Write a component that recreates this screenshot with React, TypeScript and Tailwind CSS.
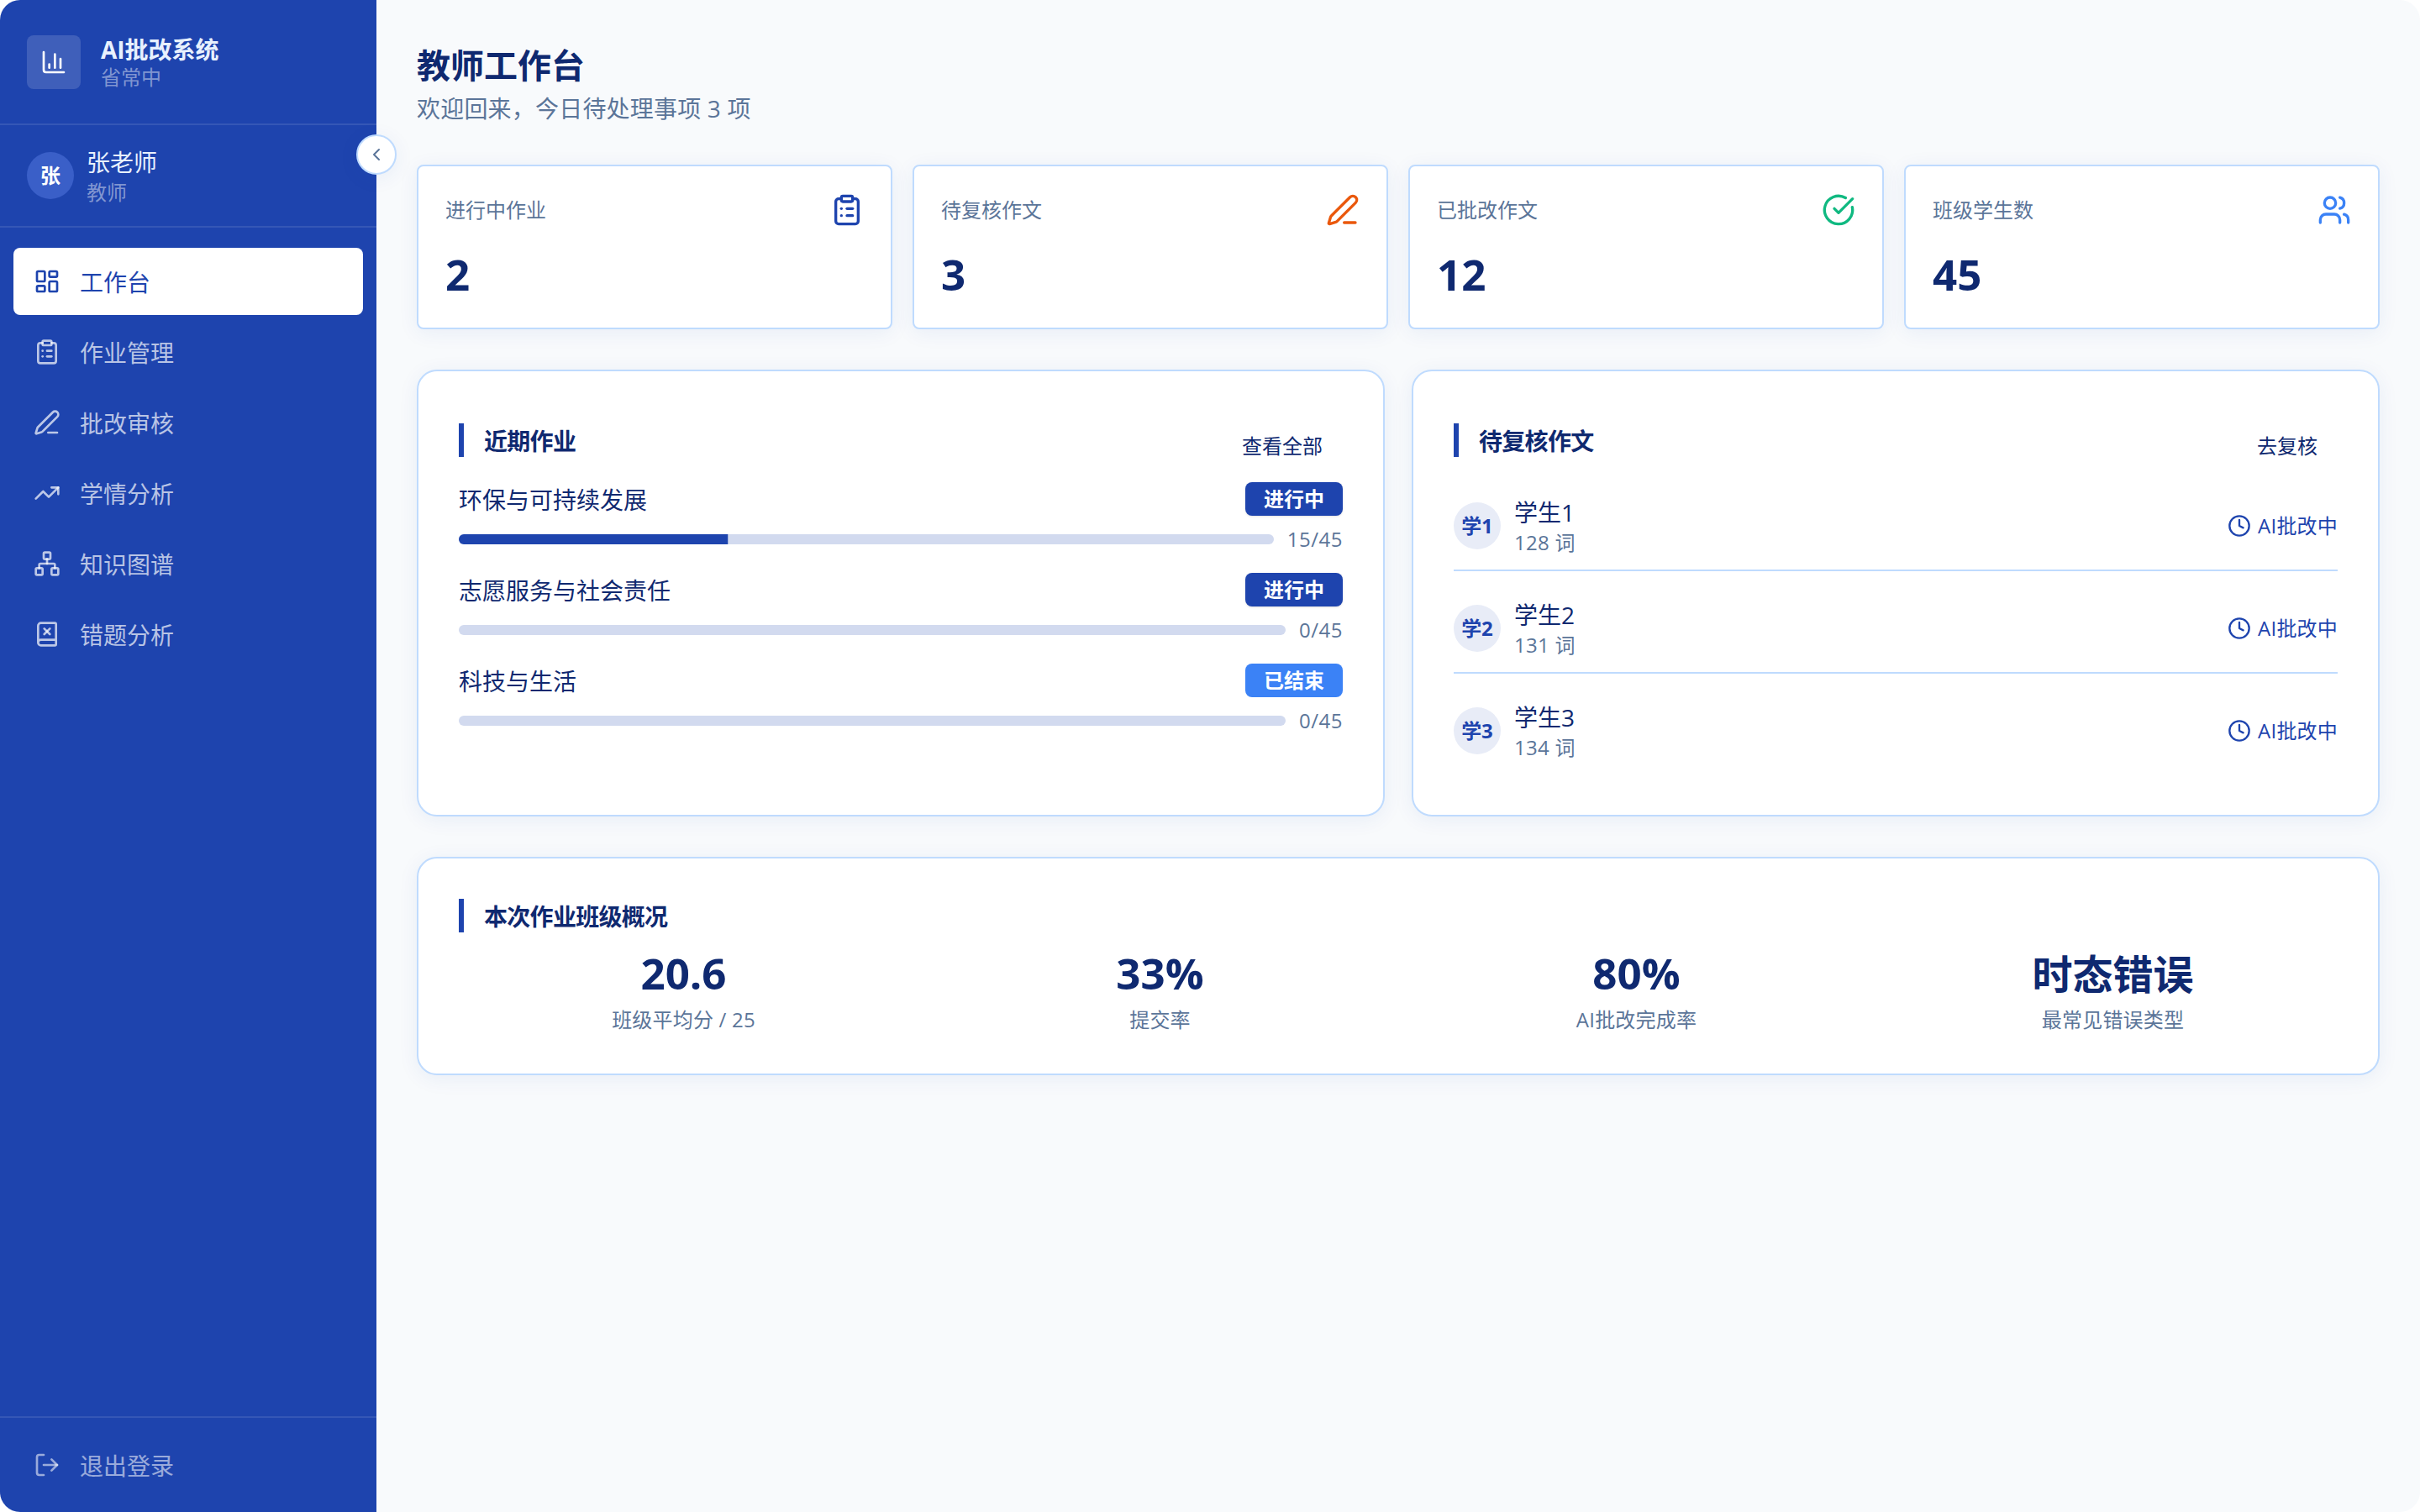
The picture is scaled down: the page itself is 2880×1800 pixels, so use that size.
import React, { useState } from 'react';
import {
    ChevronLeft,
    CircleCheckBig,
    ClipboardList,
    Clock,
    LayoutDashboard,
    LogOut,
    Network,
    PenLine,
    TrendingUp,
    Users,
} from 'lucide-react';

const NAV_ITEMS = [
    { id: 'dashboard', label: '工作台', icon: LayoutDashboard },
    { id: 'homework', label: '作业管理', icon: ClipboardList },
    { id: 'review', label: '批改审核', icon: PenLine },
    { id: 'analysis', label: '学情分析', icon: TrendingUp },
    { id: 'graph', label: '知识图谱', icon: Network },
    { id: 'mistakes', label: '错题分析', icon: BookX },
];

const STATS = [
    { label: '进行中作业', value: 2, icon: ClipboardList, color: 'text-[#1e44ae]' },
    { label: '待复核作文', value: 3, icon: PenLine, color: 'text-[#ea580c]' },
    { label: '已批改作文', value: 12, icon: CircleCheckBig, color: 'text-[#10b981]' },
    { label: '班级学生数', value: 45, icon: Users, color: 'text-[#3b82f6]' },
];

const HOMEWORK = [
    { title: '环保与可持续发展', done: 15, total: 45, active: true },
    { title: '志愿服务与社会责任', done: 0, total: 45, active: true },
    { title: '科技与生活', done: 0, total: 45, active: false },
];

const ESSAYS = [
    { name: '学生1', short: '学1', words: 128 },
    { name: '学生2', short: '学2', words: 131 },
    { name: '学生3', short: '学3', words: 134 },
];

const OVERVIEW = [
    { value: '20.6', label: '班级平均分 / 25' },
    { value: '33%', label: '提交率' },
    { value: '80%', label: 'AI批改完成率' },
    { value: '时态错误', label: '最常见错误类型', text: true },
];

function BookX({ className }: { className?: string }) {
    return (
        <svg className={className} viewBox="0 0 24 24" fill="none" stroke="currentColor" strokeWidth="2" strokeLinecap="round" strokeLinejoin="round">
            <path d="m14.5 7-5 5" />
            <path d="M4 19.5v-15A2.5 2.5 0 0 1 6.5 2H19a1 1 0 0 1 1 1v18a1 1 0 0 1-1 1H6.5a1 1 0 0 1 0-5H20" />
            <path d="m9.5 7 5 5" />
        </svg>
    );
}

// logo mark: axis with three separate bars
function LogoIcon() {
    return (
        <svg className="w-8 h-8" viewBox="0 0 24 24" fill="none" stroke="currentColor" strokeWidth="2" strokeLinecap="round" strokeLinejoin="round">
            <path d="M3 3v16a2 2 0 0 0 2 2h16" />
            <path d="M18 17V9" />
            <path d="M13 17V5" />
            <path d="M8 17v-3" />
        </svg>
    );
}

const Sidebar = () => {
    const [active, setActive] = useState('dashboard');

    return (
        <aside className="relative w-[448px] shrink-0 h-full flex flex-col bg-[#1e44ae] text-white">
            <div className="h-[149px] flex items-center gap-6 px-8 border-b-2 border-white/10">
                <div className="w-16 h-16 rounded-lg bg-white/15 flex items-center justify-center">
                    <LogoIcon />
                </div>
                <div>
                    <div className="pt-px text-[28px] leading-[35px] font-bold text-[#e8f1fe]">AI批改系统</div>
                    <div className="text-2xl leading-[30px] text-white/45">省常中</div>
                </div>
            </div>

            <div className="h-[122px] flex items-center gap-[15px] px-8 border-b-2 border-white/10">
                <div className="w-14 h-14 rounded-full bg-[#3a5fc8] flex items-center justify-center text-2xl font-bold">张</div>
                <div className="pt-1">
                    <div className="text-[28px] leading-[36px] text-[#e8f1fe]">张老师</div>
                    <div className="text-2xl leading-[36px] text-white/45">教师</div>
                </div>
            </div>

            <nav className="flex-1 flex flex-col gap-1 px-4 pt-6">
                {NAV_ITEMS.map(({ id, label, icon: Icon }) => (
                    <button
                        key={id}
                        onClick={() => setActive(id)}
                        className={`h-20 flex items-center gap-[23px] px-6 rounded-lg text-[28px] ${active === id ? 'bg-white text-[#1e44ae]' : 'text-white/70'}`}
                    >
                        <Icon className="w-8 h-8" />
                        <span className="pt-0.5">{label}</span>
                    </button>
                ))}
            </nav>

            <div className="p-4 border-t-2 border-white/10">
                <button className="w-full h-20 flex items-center gap-[23px] px-6 rounded-lg text-[28px] text-white/55">
                    <LogOut className="w-8 h-8" />
                    <span className="pt-0.5">退出登录</span>
                </button>
            </div>

            <button className="absolute z-10 top-40 -right-6 w-12 h-12 rounded-full bg-white border-2 border-[#bfdbfe] shadow-[0_4px_24px_rgba(30,68,174,0.07)] flex items-center justify-center text-[#5b7599]">
                <ChevronLeft className="w-6 h-6" />
            </button>
        </aside>
    );
};

const PanelTitle = ({ children }: { children: React.ReactNode }) => (
    <h3 className="h-10 border-l-[6px] border-[#1e44ae] pl-6 text-[28px] leading-[42px] font-bold tracking-[-0.7px]">{children}</h3>
);

const PANEL = 'bg-white border-2 border-[#bfdbfe] rounded-3xl p-12 shadow-[0_4px_24px_rgba(30,68,174,0.07)]';

const App = () => {
    return (
        <div className="w-[2880px] h-[1800px] flex rounded-3xl overflow-hidden bg-[#f8fafc] text-[#0f2970] font-['Open_Sans','Noto_Sans_CJK_SC',sans-serif]">
            <Sidebar />

            <main className="flex-1 px-12 pt-12">
                <h1 className="h-[58px] text-[40px] leading-[60px] font-bold">教师工作台</h1>
                <p className="h-[90px] text-[28px] leading-[46px] tracking-[0.2px] text-[#5b7599]">欢迎回来，今日待处理事项 3 项</p>

                <div className="grid grid-cols-4 gap-6">
                    {STATS.map(({ label, value, icon: Icon, color }) => (
                        <div key={label} className="h-[196px] bg-white border-2 border-[#bfdbfe] rounded-lg p-8 shadow-[0_4px_24px_rgba(30,68,174,0.07)]">
                            <div className="flex items-center justify-between">
                                <span className="text-2xl leading-10 text-[#5b7599]">{label}</span>
                                <Icon className={`w-10 h-10 ${color}`} />
                            </div>
                            <div className="mt-5 text-[51px] leading-[72px] font-bold">{value}</div>
                        </div>
                    ))}
                </div>

                <div className="mt-12 grid grid-cols-2 gap-8">
                    <section className={`${PANEL} h-[532px]`}>
                        <div className="h-[84px] flex justify-between pt-3.5">
                            <PanelTitle>近期作业</PanelTitle>
                            <button className="h-[53px] px-6 text-2xl">查看全部</button>
                        </div>
                        {HOMEWORK.map((hw) => {
                            const percent = Math.round((hw.done / hw.total) * 100);
                            return (
                                <div key={hw.title} className="h-[108px]">
                                    <div className="h-10 flex items-center justify-between">
                                        <span className="pt-0.5 text-[28px] leading-10">{hw.title}</span>
                                        <span className={`h-10 px-[22px] rounded-lg text-2xl leading-10 font-bold text-white ${hw.active ? 'bg-[#1e44ae] shadow-sm' : 'bg-[#3b82f6]'}`}>
                                            {hw.active ? '进行中' : '已结束'}
                                        </span>
                                    </div>
                                    <div className="mt-2.5 h-9 flex items-center gap-4">
                                        <div className="flex-1 h-3 rounded-full bg-[#d2daef] overflow-hidden">
                                            <div className="h-full w-full bg-[#1e44ae]" style={{ transform: `translateX(-${100 - percent}%)` }} />
                                        </div>
                                        <span className="text-2xl tracking-[0.5px] text-[#5b7599]">{hw.done}/{hw.total}</span>
                                    </div>
                                </div>
                            );
                        })}
                    </section>

                    <section className={`${PANEL} h-[532px]`}>
                        <div className="h-[84px] flex justify-between pt-3.5">
                            <PanelTitle>待复核作文</PanelTitle>
                            <button className="h-[53px] px-6 text-2xl">去复核</button>
                        </div>
                        <div className="flex flex-col gap-4">
                            {ESSAYS.map((essay, i) => (
                                <div key={essay.name} className={`flex items-center py-4 ${i < ESSAYS.length - 1 ? 'border-b-2 border-[#bfdbfe]' : ''}`}>
                                    <div className="w-14 h-14 rounded-full bg-[#e8ecf7] flex items-center justify-center text-2xl font-bold text-[#1e44ae]">{essay.short}</div>
                                    <div className="ml-4 flex-1 pt-0.5">
                                        <div className="text-[28px] leading-[37px]">{essay.name}</div>
                                        <div className="text-2xl leading-[33px] tracking-[0.3px] text-[#5b7599]">{essay.words} 词</div>
                                    </div>
                                    <div className="flex items-center gap-2 text-2xl tracking-[0.2px] text-[#1e44ae]">
                                        <Clock className="w-7 h-7" />
                                        AI批改中
                                    </div>
                                </div>
                            ))}
                        </div>
                    </section>
                </div>

                <section className={`${PANEL} mt-12 h-[260px]`}>
                    <PanelTitle>本次作业班级概况</PanelTitle>
                    <div className="mt-3 grid grid-cols-4 gap-8 text-center">
                        {OVERVIEW.map((item) => (
                            <div key={item.label}>
                                <div className={`h-[72px] font-bold ${item.text ? 'text-5xl/[75px]' : 'text-[51px]/[72px]'}`}>{item.value}</div>
                                <div className="text-2xl leading-10 tracking-[0.2px] text-[#5b7599]">{item.label}</div>
                            </div>
                        ))}
                    </div>
                </section>
            </main>
        </div>
    );
};

export default App;
